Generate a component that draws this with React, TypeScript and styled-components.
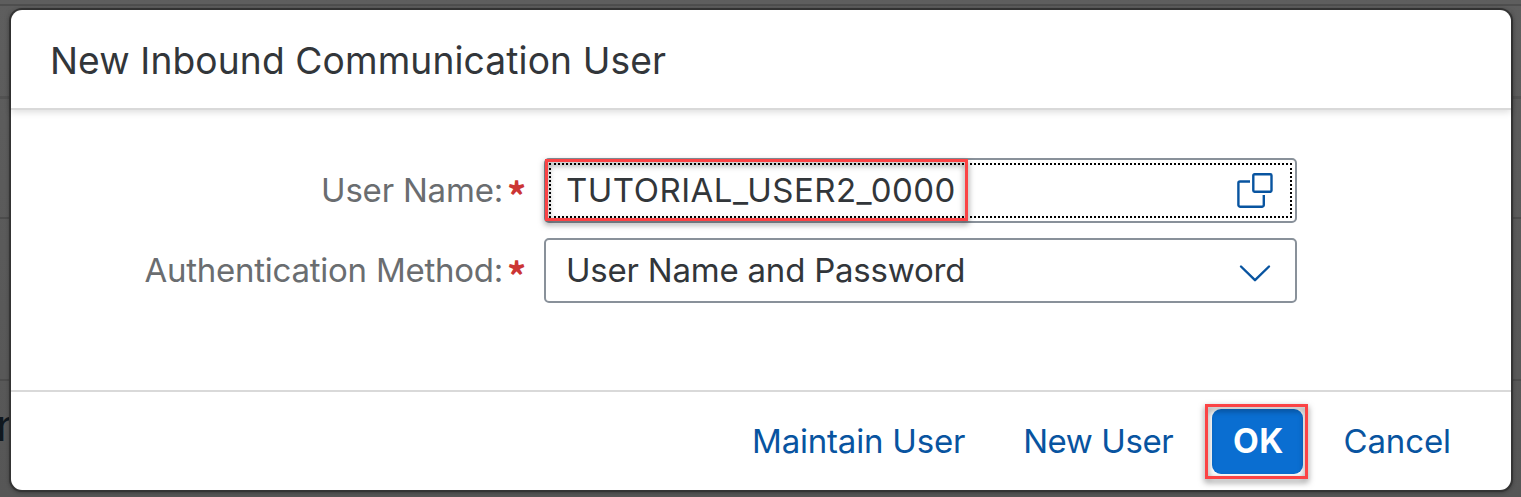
import React from 'react';
import styled, { createGlobalStyle } from 'styled-components';

const Global = createGlobalStyle`
  * { box-sizing: border-box; }
  body { margin: 0; font-family: Inter, sans-serif; }
`;

const Backdrop = styled.div`
  position: relative;
  width: 1521px;
  height: 497px;
  padding: 10px 10px 7px 11px;
  overflow: hidden;
  background:
    linear-gradient(#4e4e4e, #4e4e4e) 0 4px / 100% 2px no-repeat,
    linear-gradient(#525252, #525252) 0 96px / 100% 3px no-repeat,
    linear-gradient(#4c4c4c, #4c4c4c) 0 217px / 100% 2px no-repeat,
    linear-gradient(#4c4c4c, #4c4c4c) 0 379px / 100% 2px no-repeat,
    linear-gradient(#5e5e5e, #565656);
`;

const PageText = styled.span`
  position: absolute;
  left: -4px;
  top: 401px;
  font-size: 44px;
  line-height: 48px;
  color: #10181f;
`;

const Dialog = styled.section`
  position: relative;
  display: flex;
  flex-direction: column;
  height: 480px;
  border-radius: 11px;
  background: #fff;
  box-shadow: 0 0 0 2px #343434, 0 1px 4px 1px rgba(0, 0, 0, 0.45);
`;

const Header = styled.header`
  display: flex;
  align-items: center;
  height: 100px;
  padding: 3px 40px 0 39px;
  border-bottom: 2px solid #d9d9d9;
  box-shadow: 0 2px 7px rgba(0, 0, 0, 0.14);
`;

const Title = styled.h1`
  margin: 0;
  font-size: 37.2px;
  font-weight: 400;
  line-height: 50px;
  letter-spacing: 0.1px;
  color: #32363a;
`;

const Form = styled.div`
  flex: 1;
  display: grid;
  grid-template-columns: 514px 753px;
  grid-auto-rows: 65px;
  column-gap: 19px;
  row-gap: 15px;
  padding-top: 48px;
`;

const Label = styled.label<{ $spacing: number }>`
  display: flex;
  align-items: center;
  justify-content: flex-end;
  padding-bottom: 1px;
  font-size: 33px;
  line-height: 44px;
  letter-spacing: ${p => p.$spacing}px;
  color: #6a6d70;
`;

const Required = styled.span`
  width: 18px;
  height: 44px;
  margin-left: 4px;
  font-family: "Noto Sans CJK SC", sans-serif;
  font-size: 38px;
  font-weight: 700;
  line-height: 54px;
  letter-spacing: 0;
  text-align: center;
  color: #cc3535;
`;

const Field = styled.div`
  position: relative;
  display: flex;
  align-items: center;
  justify-content: space-between;
  padding: 0 22px 0 20px;
  border: 2px solid #89919a;
  border-radius: 5px;
  background: #fff;
`;

const FocusOutline = styled.span`
  position: absolute;
  inset: 3px;
  border: 2px dotted #000;
`;

const Value = styled.span<{ $spacing: number }>`
  padding-bottom: 1px;
  font-size: 33px;
  line-height: 44px;
  letter-spacing: ${p => p.$spacing}px;
  color: #32363a;
  white-space: nowrap;
`;

const Marker = styled.span<{ $inset: string }>`
  position: absolute;
  inset: ${p => p.$inset};
  border: 3px solid #fb4345;
  filter: drop-shadow(0 3px 3px rgba(0, 0, 0, 0.55));
`;

const Footer = styled.footer`
  display: flex;
  align-items: center;
  justify-content: flex-end;
  height: 100px;
  padding: 0 60px 0 0;
  border-top: 2px solid #d9d9d9;
`;

const Action = styled.button<{ $spacing: number; $gap: number }>`
  margin: 0 ${p => p.$gap}px 1px 0;
  padding: 0;
  border: 0;
  background: none;
  font: 400 33px/44px Inter, sans-serif;
  letter-spacing: ${p => p.$spacing}px;
  color: #0854a0;
  white-space: nowrap;
`;

const Primary = styled.div`
  position: relative;
  width: 91px;
  height: 65px;
  margin-right: 40px;
`;

const PrimaryButton = styled.button`
  width: 100%;
  height: 100%;
  padding: 0 0 1px 1px;
  border: 0;
  border-radius: 9px;
  background: #0a6ed1;
  font: 700 33.5px/44px Inter, sans-serif;
  letter-spacing: 0.4px;
  color: #fff;
`;

const ValueHelpIcon = () => (
  <svg width="36" height="36" viewBox="0 0 36 36" fill="none" stroke="#0854a0" strokeWidth="2.4">
    <rect x="16.3" y="1.3" width="18.2" height="17.4" rx="1.2" />
    <path d="M13 8.5H3a1.6 1.6 0 0 0-1.6 1.6v22a1.6 1.6 0 0 0 1.6 1.6h22.2a1.6 1.6 0 0 0 1.6-1.6V22" />
  </svg>
);

const ArrowIcon = () => (
  <svg width="36" height="36" viewBox="0 0 36 36" fill="none" stroke="#0854a0" strokeWidth="2.4" strokeLinecap="round" strokeLinejoin="round">
    <path d="M4 13.5 18 27.2 32 13.5" />
  </svg>
);

export default function App() {
  return (
    <Backdrop>
      <Global />
      <PageText aria-hidden>n</PageText>
      <Dialog role="dialog">
        <Header>
          <Title>New Inbound Communication User</Title>
        </Header>
        <Form>
          <Label $spacing={-0.2}>User Name:<Required>*</Required></Label>
          <Field>
            <FocusOutline />
            <Value $spacing={0.5}>TUTORIAL_USER2_0000</Value>
            <ValueHelpIcon />
            <Marker $inset="-1px 327px 0 -1px" />
          </Field>
          <Label $spacing={-0.25}>Authentication Method:<Required>*</Required></Label>
          <Field>
            <Value $spacing={-0.22}>User Name and Password</Value>
            <ArrowIcon />
          </Field>
        </Form>
        <Footer>
          <Action $spacing={-0.2} $gap={58}>Maintain User</Action>
          <Action $spacing={-0.4} $gap={39}>New User</Action>
          <Primary>
            <PrimaryButton>OK</PrimaryButton>
            <Marker $inset="-5px -5px -5px -7px" />
          </Primary>
          <Action $spacing={-0.1} $gap={0}>Cancel</Action>
        </Footer>
      </Dialog>
    </Backdrop>
  );
}
